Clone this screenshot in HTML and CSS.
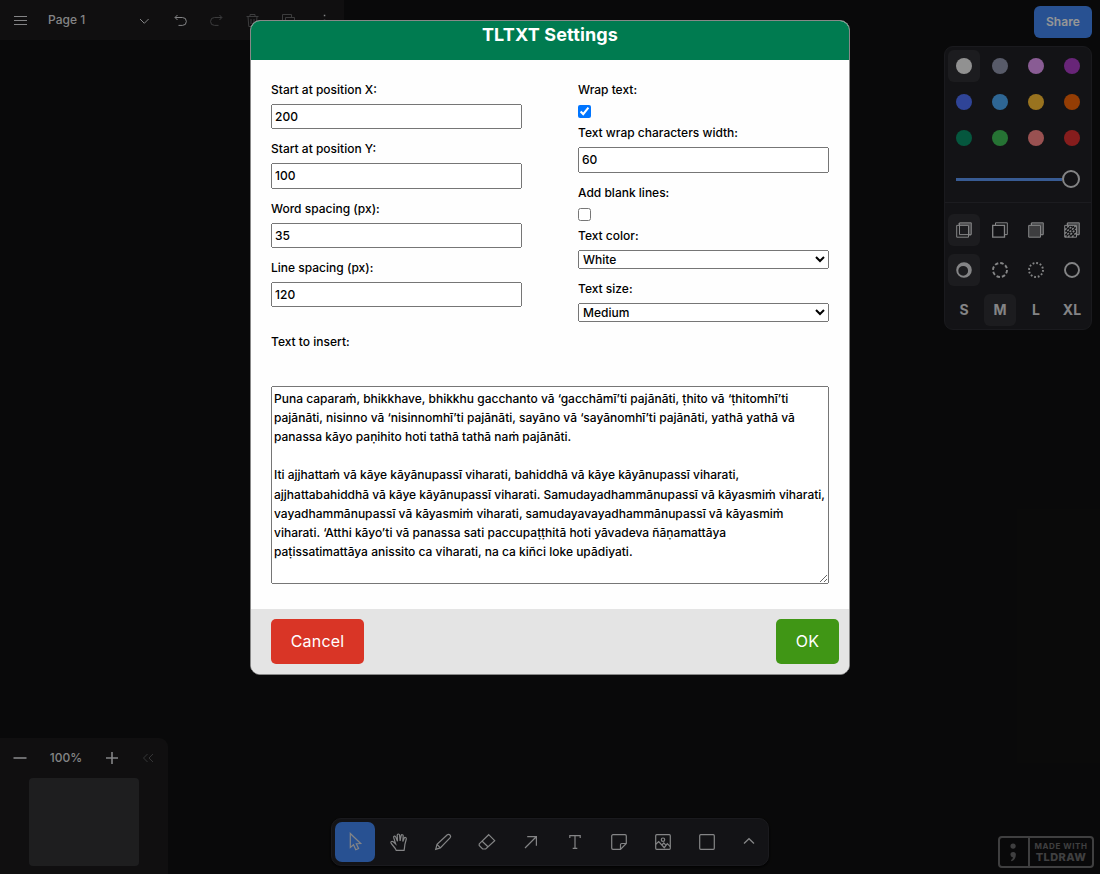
FILE: index.html
```html
<!DOCTYPE html>
<html lang="en">
<head>
<meta charset="utf-8">
<title>TLTXT Settings</title>
<link rel="stylesheet" href="styles.css">
</head>
<body>
<div class="app">
  <header class="top">
    <nav class="menubar">
      <svg class="icon" viewBox="0 0 16 16"><path d="M2 4.500h13M2 8.500h13M2 12.500h13"/></svg>
      <span class="page-name">Page 1</span>
      <svg class="icon chevron" viewBox="0 0 16 16"><path d="M4 7l4.300 4.300 4.300-4.300"/></svg>
      <svg class="icon undo" viewBox="0 0 16 16"><path d="M5.500 3L3 5.500 5.500 8M3.200 5.500h7.200a3.900 3.900 0 0 1 0 7.900H6.500"/></svg>
      <svg class="icon redo faded" viewBox="0 0 16 16"><path d="M11.500 3l2.400 2.500L11.500 8M13.700 5.500H6.500a3.900 3.900 0 0 0 0 7.900h4"/></svg>
      <svg class="icon trash faded" viewBox="0 0 16 16"><path d="M2.500 4.500h12M6 4.500v-2h5v2M4 4.500l.8 10h7.400l.8-10M7 7v5M10 7v5"/></svg>
      <svg class="icon copy faded" viewBox="0 0 16 16"><path d="M5.500 10.500h-3v-8h9v3M5.500 5.500h9v9h-9z"/></svg>
      <svg class="icon more" viewBox="0 0 16 16"><path class="solid" d="M7.800 2.800h1.500v1.500H7.800zM7.800 7.800h1.500v1.500H7.800zM7.800 12.800h1.500v1.500H7.800z"/></svg>
    </nav>
    <aside class="side">
      <button class="share">Share</button>
      <section class="styles">
        <div class="swatches">
          <span class="cell on"><i class="dot white"></i></span><span class="cell"><i class="dot grey"></i></span><span class="cell"><i class="dot lviolet"></i></span><span class="cell"><i class="dot violet"></i></span>
          <span class="cell"><i class="dot blue"></i></span><span class="cell"><i class="dot lblue"></i></span><span class="cell"><i class="dot yellow"></i></span><span class="cell"><i class="dot orange"></i></span>
          <span class="cell"><i class="dot green"></i></span><span class="cell"><i class="dot lgreen"></i></span><span class="cell"><i class="dot lred"></i></span><span class="cell"><i class="dot red"></i></span>
        </div>
        <div class="slider"><span class="track"></span><span class="thumb"></span></div>
        <div class="options">
          <span class="cell on"><svg class="icon" viewBox="0 0 16 16"><path d="M.7 3.400h11.800v11.800H.7z"/><path d="M3.500.8h11.800v11.800H3.500z"/><path class="dim" d="M2 2.100h11.900v11.800"/></svg></span>
          <span class="cell"><svg class="icon" viewBox="0 0 16 16"><path class="s12" d="M.7 3.400h11.800v11.800H.7z"/><path d="M3.500 3.200V.8h11.800v11.800h-2.600"/></svg></span>
          <span class="cell"><svg class="icon" viewBox="0 0 16 16"><path class="semi" d="M.7 3.400h11.800v11.800H.7z"/><path d="M3.500 3.200V.8h11.800v11.800h-2.600"/><path class="dim" d="M2.500 2h11.600v11.600"/></svg></span>
          <span class="cell"><svg class="icon" viewBox="0 0 16 16"><path d="M.7 3.400h11.800v11.800H.7z"/><path d="M3.500 3.200V.8h11.800v11.800h-2.600"/><path class="dim" d="M2.500 2h11.600v11.600"/><path class="hatch" d="M1 8l4-4.500M1 11.500l7.500-8M1 15l11-11.500M4 15l8-8M8 15l4-4"/></svg></span>
          <span class="cell on"><svg class="icon" viewBox="0 0 16 16"><path class="solid" fill-rule="evenodd" d="M.2 8a7.800 7.800 0 1 0 15.600 0A7.800 7.800 0 1 0 .2 8zM2.300 8.800a4.900 4.900 0 1 0 9.800 0 4.900 4.900 0 1 0-9.800 0z"/></svg></span>
          <span class="cell"><svg class="icon" viewBox="0 0 16 16"><circle class="s2 dashed" cx="8" cy="8" r="7"/></svg></span>
          <span class="cell"><svg class="icon" viewBox="0 0 16 16"><circle class="s2 dotted" cx="8" cy="8" r="7"/></svg></span>
          <span class="cell"><svg class="icon" viewBox="0 0 16 16"><circle class="s2" cx="8" cy="8" r="7"/></svg></span>
          <span class="cell">S</span><span class="cell on">M</span><span class="cell">L</span><span class="cell">XL</span>
        </div>
      </section>
    </aside>
  </header>
  <footer class="bottom">
    <section class="navigation">
      <div class="zoom">
        <svg class="icon" viewBox="0 0 16 16"><path class="s15" d="M1.500 8h13"/></svg>
        <span class="percent">100%</span>
        <svg class="icon" viewBox="0 0 16 16"><path class="s15" d="M8 2v12M2 8h12"/></svg>
        <svg class="icon more-faded" viewBox="0 0 16 16"><path d="M7.500 4l-4 4 4 4M13 4L9 8l4 4"/></svg>
      </div>
      <div class="minimap"></div>
    </section>
    <section class="toolbar">
      <span class="tool active"><svg class="icon tl" viewBox="0 0 20 20"><path d="M5.300 1.500v14l3.200-2.800 2.300 5 2.800-1.200-2.300-4.800 4.400-.2z"/></svg></span>
      <span class="tool"><svg class="icon tl" viewBox="0 0 20 20"><path d="M7.200 18.300c-.2-2-4.300-5.200-5.300-7.500-.4-1.300 1.400-2 2.400-1l2.300 2.100-1.900-6.200c-.4-1.600 1.500-2.200 2-.8l1.800 4.300-.3-6c0-1.600 2.200-1.600 2.400 0l.5 5.800 1-5.300c.3-1.500 2.300-1.200 2.100.3l-.4 5.500 1.300-3.300c.7-1.300 2.500-.8 2.200.8l-1.400 5.300c-.2 2-.4 4-.8 6z"/></svg></span>
      <span class="tool"><svg class="icon tl" viewBox="0 0 20 20"><path d="M2.700 17.300l1.300-5L14.300 2.800c1.800-1.500 4.300 1 2.900 2.900L7.300 15.900zM4 12.300l3.300 3.600"/></svg></span>
      <span class="tool"><svg class="icon tl" viewBox="0 0 20 20"><path d="M11.700 2.700l6 6-9 8.300H5.600L2.200 13.500v-1.600zM5.200 9.300l6 5.700"/></svg></span>
      <span class="tool"><svg class="icon tl" viewBox="0 0 20 20"><path d="M4 16L15 5M6.200 4.600h9.200v9.200"/></svg></span>
      <span class="tool"><svg class="icon tl" viewBox="0 0 20 20"><path d="M4.800 6V3.600h10.400V6M10 3.600v12.800M7.700 16.400h4.600"/></svg></span>
      <span class="tool"><svg class="icon tl" viewBox="0 0 20 20"><path d="M11.500 17.300H4a1.300 1.300 0 0 1-1.300-1.300V4A1.300 1.300 0 0 1 4 2.700h12A1.300 1.300 0 0 1 17.300 4v7.500zM11.500 17.300v-4.500a1.300 1.300 0 0 1 1.300-1.300h4.500"/></svg></span>
      <span class="tool"><svg class="icon tl" viewBox="0 0 20 20"><rect x="2.700" y="2.700" width="14.600" height="14.600" rx="1"/><circle cx="10" cy="7.700" r="1.700"/><path d="M2.700 12.200l3-2.700 5.600 6.200 3-4 3 3M9 13l1.800-2.200 1.800 2"/></svg></span>
      <span class="tool"><svg class="icon tl" viewBox="0 0 20 20"><rect x="2.700" y="2.700" width="14.600" height="14.600" rx="1"/></svg></span>
      <span class="tool"><svg class="icon" viewBox="0 0 16 16"><path class="s12" d="M3 9.500l5-4.800 5 4.800"/></svg></span>
    </section>
    <div class="badge">
      <svg class="mark" viewBox="0 0 30 28"><circle cx="14" cy="7.700" r="2.800"/><path d="M11.200 16.800a2.900 2.900 0 0 1 5.800 0c0 4-2 6.500-4.800 7.200l-.4-1.300c1.300-.7 1.800-1.600 2-3a2.900 2.900 0 0 1-2.600-2.900z"/></svg>
      <div class="badge-text"><span class="made">MADE WITH</span><span class="brand">TLDRAW</span></div>
    </div>
  </footer>
</div>
<div class="overlay">
  <form class="dialog">
    <h1 class="dialog-title">TLTXT Settings</h1>
    <div class="dialog-body">
      <div class="columns">
        <div class="column left">
          <label class="label">Start at position X:</label><input class="field" type="text" value="200">
          <label class="label">Start at position Y:</label><input class="field" type="text" value="100">
          <label class="label">Word spacing (px):</label><input class="field" type="text" value="35">
          <label class="label">Line spacing (px):</label><input class="field" type="text" value="120">
        </div>
        <div class="column">
          <label class="label">Wrap text:</label><input class="check" type="checkbox" checked>
          <label class="label">Text wrap characters width:</label><input class="field" type="text" value="60">
          <label class="label">Add blank lines:</label><input class="check" type="checkbox">
          <label class="label">Text color:</label><select class="choice"><option>White</option></select>
          <label class="label">Text size:</label><select class="choice"><option>Medium</option></select>
        </div>
      </div>
      <label class="label">Text to insert:</label>
      <textarea class="content" spellcheck="false">Puna caparaṁ, bhikkhave, bhikkhu gacchanto vā ‘gacchāmī’ti pajānāti, ṭhito vā ‘ṭhitomhī’ti pajānāti, nisinno vā ‘nisinnomhī’ti pajānāti, sayāno vā ‘sayānomhī’ti pajānāti, yathā yathā vā panassa kāyo paṇihito hoti tathā tathā naṁ pajānāti.

Iti ajjhattaṁ vā kāye kāyānupassī viharati, bahiddhā vā kāye kāyānupassī viharati, ajjhattabahiddhā vā kāye kāyānupassī viharati. Samudayadhammānupassī vā kāyasmiṁ viharati, vayadhammānupassī vā kāyasmiṁ viharati, samudayavayadhammānupassī vā kāyasmiṁ viharati. ‘Atthi kāyo’ti vā panassa sati paccupaṭṭhitā hoti yāvadeva ñāṇamattāya
paṭissatimattāya anissito ca viharati, na ca kiñci loke upādiyati.</textarea>
    </div>
    <div class="actions">
      <button class="btn cancel" type="button">Cancel</button>
      <button class="btn ok" type="button">OK</button>
    </div>
  </form>
</div>
</body>
</html>
```
FILE: styles.css
```css
* { box-sizing: border-box; }
body { margin: 0; height: 874px; overflow: hidden; font-family: Inter, sans-serif; font-size: 12px; font-weight: 500; line-height: 1.6; }
.app { height: 874px; background: #101011; color: #f9fafb; display: flex; flex-direction: column; justify-content: space-between; }
.icon { display: block; flex: none; width: 16px; height: 16px; fill: none; stroke: #dcdddf; stroke-width: 1; }
.tl { width: 20px; height: 20px; stroke-width: 1.2; }
.faded { opacity: .38; }
.solid { fill: #dcdddf; stroke: none; }
.dim { opacity: .45; stroke-width: 2; }
.semi { fill: #66676a; }
.hatch { stroke-width: 1.5; stroke-dasharray: 2.2 1.2; }
.s12 { stroke-width: 1.3; }
.s2 { stroke-width: 1.9; }
.s15 { stroke-width: 1.6; }
.dashed { stroke-dasharray: 3.5 2; }
.dotted { stroke-dasharray: 1.8 1.865; }

.top { display: flex; justify-content: space-between; align-items: flex-start; }
.menubar { width: 344px; height: 40px; padding-left: 12px; background: #1b1a1c; display: flex; align-items: center; }
.page-name { width: 88px; margin-left: 20px; color: #dcdddf; }
.undo { margin-left: 20px; }
.redo, .trash, .copy, .more { margin-left: 20px; }
.side { width: 148px; margin: 6px 8px 0 0; display: flex; flex-direction: column; align-items: flex-end; gap: 8px; }
.share { width: 58px; height: 32px; padding: 0 0 2px; border: 0; border-radius: 6px; background: #4387f4; color: #f9fafb; font: 600 12px Inter, sans-serif; letter-spacing: .1px; }
.styles { width: 148px; height: 284px; padding: 1px; border: 1px solid #2c2c32; border-radius: 9px; background: #202125; }
.swatches { display: grid; grid-template-columns: repeat(4, 36px); grid-auto-rows: 36px; }
.options { display: grid; grid-template-columns: repeat(4, 36px); grid-auto-rows: 40px; margin: 0 -1px; padding: 7px 1px 0; border-top: 1px solid #303036; }
.cell { display: flex; align-items: center; justify-content: center; margin: 2px; border-radius: 6px; font-size: 14px; font-weight: 700; color: #dcdddf; }
.options .cell { margin: 4px 2px; }
.on { background: #303034; }
.dot { width: 16px; height: 16px; border-radius: 50%; }
.white { background: #f2f2f2; }
.grey { background: #9398b0; }
.lviolet { background: #e599f7; }
.violet { background: #ae3ec9; }
.blue { background: #4f72fc; }
.lblue { background: #4dabf7; }
.yellow { background: #ffc034; }
.orange { background: #f76707; }
.green { background: #099268; }
.lgreen { background: #40c057; }
.lred { background: #ff8787; }
.red { background: #e03131; }
.slider { height: 46px; padding: 0 10px; display: flex; align-items: center; }
.track { flex: 1; height: 3px; background: #5e98f5; }
.thumb { width: 18px; height: 18px; border: 2px solid #dcdddf; border-radius: 50%; }

.bottom { display: grid; grid-template-columns: 331px 438px 1fr; align-items: end; }
.navigation { width: 168px; height: 136px; background: #1b1a1c; border-radius: 0 9px 0 0; }
.zoom { height: 40px; padding: 0 12px; display: flex; align-items: center; }
.percent { width: 76px; text-align: center; color: #dcdddf; }
.more-faded { margin-left: 20px; opacity: .32; }
.minimap { width: 110px; height: 88px; margin-left: 29px; border-radius: 4px; background: #323235; }
.toolbar { height: 48px; margin-bottom: 8px; padding: 0 3px; border: 1px solid #2c2c32; border-radius: 10px; background: #202125; display: flex; align-items: center; gap: 4px; box-shadow: 0 1px 3px #000; }
.tool { width: 40px; height: 40px; border-radius: 7px; display: flex; align-items: center; justify-content: center; flex: none; }
.tool:last-child { width: 36px; }
.active { background: #4387f4; }
.badge { justify-self: end; width: 96px; height: 32px; margin: 0 6px 6px 0; border: 2px solid #6a6a6c; border-radius: 4px; display: flex; color: #6a6a6c; }
.mark { width: 30px; height: 28px; border-right: 2px solid #6a6a6c; fill: #6a6a6c; }
.badge-text { flex: 1; display: flex; flex-direction: column; align-items: center; padding-top: 3px; }
.made { font-size: 8px; line-height: 10px; font-weight: 700; letter-spacing: .6px; }
.brand { font-size: 11px; line-height: 13px; font-weight: 800; letter-spacing: .4px; }

.overlay { position: absolute; inset: 0; display: flex; justify-content: center; align-items: flex-start; padding-top: 20px; background: rgba(0, 0, 0, .4); }
.dialog { width: 600px; height: 655px; display: flex; flex-direction: column; border: 1px solid #888; border-radius: 10px; overflow: hidden; background: #fefefe; color: #000; }
.dialog-title { flex: none; height: 39px; margin: 0; background: #007b50; color: #fff; font-size: 18px; font-weight: 700; line-height: 28px; letter-spacing: .15px; text-align: center; }
.dialog-body { flex: 1; padding: 20px 20px 0; }
.columns { display: flex; justify-content: space-between; height: 252px; }
.column { width: 251px; }
.left { margin-top: -.2px; }
.label { display: block; }
.field { display: block; width: 100%; margin: 5px 0 10px; font: inherit; }
.check { display: block; width: 13px; height: 13px; margin: 6px 0 5px; }
.choice { display: block; width: 100%; height: 19px; margin: 5px 0 10px; font: inherit; line-height: normal; }
.content { display: block; width: 558px; height: 198px; margin-top: 34.500px; font: inherit; resize: both; }
.actions { flex: none; height: 65px; padding: 10px 10px 10px 20px; background: #e4e4e4; display: flex; justify-content: space-between; }
.btn { height: 45px; padding: 0 0 2px; border: 0; border-radius: 5px; color: #fff; font: 400 16px Inter, sans-serif; letter-spacing: .2px; }
.cancel { width: 93px; background: #d93526; }
.ok { width: 63px; background: #409615; }
```
